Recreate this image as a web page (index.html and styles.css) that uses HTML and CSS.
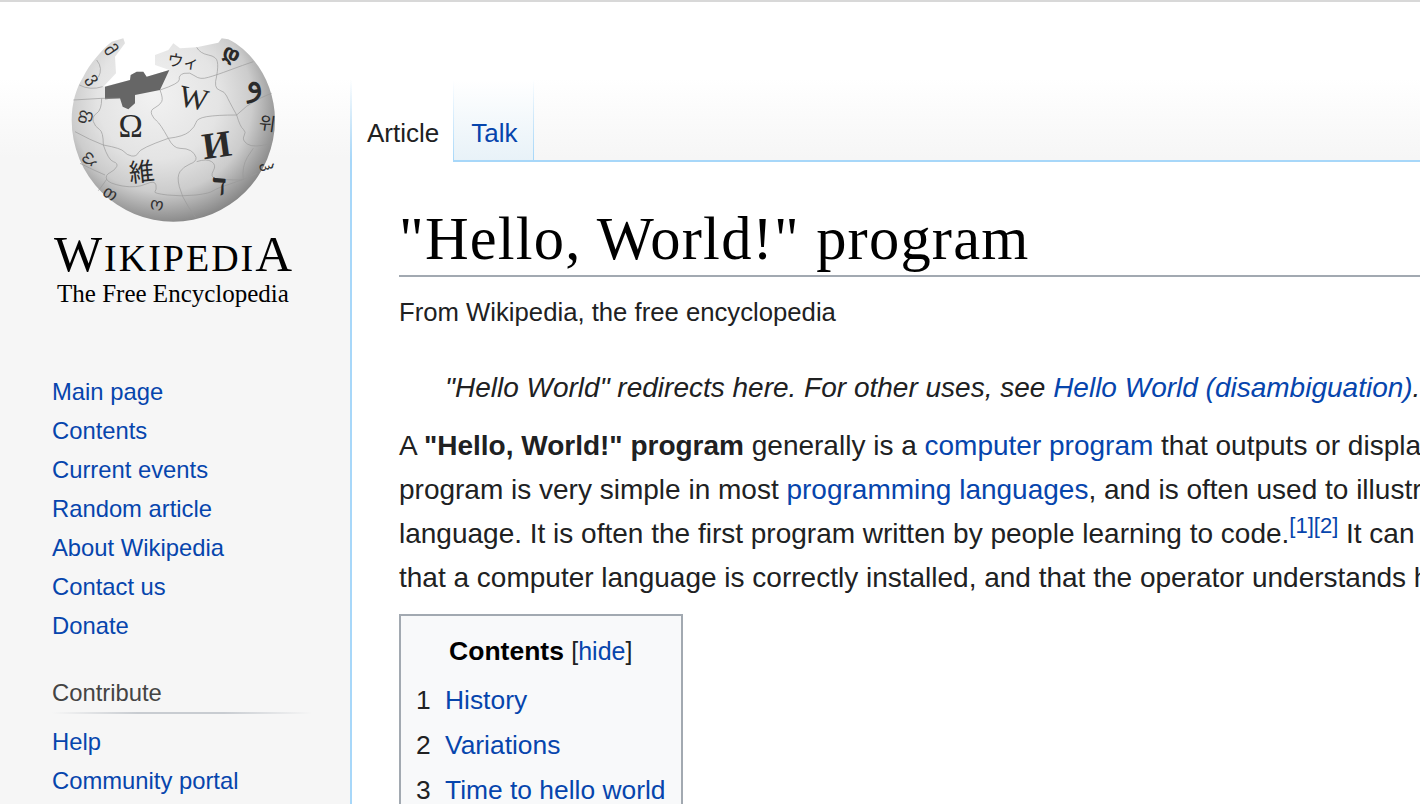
FILE: index.html
```html
<!DOCTYPE html>
<html>
<head>
    <title>"Hello, World!" program - Wikipedia</title>
    <link rel="stylesheet" href="styles.css">
</head>
<body>
    <div class="page">
        <aside class="sidebar">
            <div class="logo">
                <svg class="globe" viewBox="0 0 810 645" width="270" height="215">
                    <defs>
                        <radialGradient id="ball" gradientUnits="userSpaceOnUse" cx="370" cy="250" r="365" fx="340" fy="220">
                            <stop offset="0" stop-color="#f2f2f2"/>
                            <stop offset="0.5" stop-color="#e4e4e4"/>
                            <stop offset="0.75" stop-color="#cccccc"/>
                            <stop offset="1" stop-color="#858585"/>
                        </radialGradient>
                    </defs>
                    <!-- globe with the missing pieces at the top -->
                    <path fill="url(#ball)" d="M95 300C95 250 108 205 130 170C150 130 185 90 215 65L250 55L255 70L225 110L228 160L190 200L270 180L272 165L290 155L310 155L320 170L388 150L345 135L345 105L385 90L400 70L420 85L470 82L535 68L545 55L565 58C640 95 705 190 705 300A305 305 0 0 1 95 300Z"/>
                    <path fill="#666" d="M195 200L270 180L272 165L290 155L310 155L320 170L388 150L360 210L285 225L285 250L265 268L248 260L240 235L195 238Z"/>
                    <g class="seams">
                        <path d="M100 240L185 235L240 235"/>
                        <path d="M185 235Q185 270 170 280Q155 290 160 305Q165 320 178 328Q190 335 190 375"/>
                        <path d="M105 335Q150 360 190 375Q245 385 252 395Q260 405 275 408Q290 410 295 398Q300 385 385 355"/>
                        <path d="M385 355Q360 310 350 303Q340 295 335 283Q330 270 345 263Q360 255 365 245Q370 235 360 210"/>
                        <path d="M385 355Q430 350 448 335Q465 320 468 308Q470 295 500 290Q530 285 590 285Q620 255 650 240Q680 225 695 220"/>
                        <path d="M360 210Q420 190 418 178Q415 165 432 160Q450 155 465 168Q480 180 505 172Q530 165 570 150Q610 135 640 125"/>
                        <path d="M530 168Q520 205 538 210Q555 215 560 228Q565 240 590 285Q600 320 610 328Q620 335 612 348Q605 360 622 372Q640 385 695 370"/>
                        <path d="M385 355Q400 385 420 385Q440 385 452 392Q465 400 468 412Q470 425 450 432Q430 440 420 455Q410 470 418 500Q425 530 445 560Q465 590 470 596"/>
                        <path d="M470 425Q500 415 515 425Q530 435 520 452Q510 470 525 475Q540 480 610 480Q605 440 622 412Q635 392 640 385"/>
                        <path d="M190 375Q205 420 220 425Q235 430 230 440Q225 450 210 458Q195 465 200 478Q205 490 247 498Q290 505 318 492Q345 480 348 495Q350 510 345 515Q340 520 382 525Q425 530 468 525Q510 520 520 512Q530 505 570 492Q610 480 650 460"/>
                        <path d="M120 430Q160 450 195 465"/>
                        <path d="M470 82Q480 100 505 105Q530 110 532 125Q535 140 530 168"/>
                        <path d="M200 478Q185 500 175 512"/>
                        <path d="M118 195Q150 212 188 200"/>
                        <path d="M170 120Q190 145 175 172"/>
                    </g>
                    <g class="glyphs">
                        <text class="glyph-w" x="460" y="265" transform="rotate(12 460 240)">W</text>
                        <text class="glyph-o" x="272" y="350">Ω</text>
                        <text class="glyph-i" x="530" y="412" transform="rotate(-8 530 375)">И</text>
                        <text class="glyph-c" x="305" y="483" transform="rotate(-6 305 455)">維</text>
                        <text class="glyph-k" x="430" y="142" transform="rotate(8 430 125)">ウィ</text>
                        <text class="glyph-a" x="640" y="220" transform="rotate(-12 640 190)">و</text>
                        <text class="glyph-h" x="682" y="330" transform="rotate(8 682 312)">위</text>
                        <text class="glyph-l" x="538" y="525" transform="rotate(4 540 495)">ד</text>
                        <text class="glyph-s" x="130" y="305" transform="rotate(-78 130 290)">ფ</text>
                        <text class="glyph-s" x="145" y="430" transform="rotate(-50 145 415)">ღ</text>
                        <text class="glyph-s" x="155" y="190" transform="rotate(55 155 180)">ვ</text>
                        <text class="glyph-s" x="205" y="105" transform="rotate(55 205 95)">მ</text>
                        <text class="glyph-b" x="575" y="120" transform="rotate(25 575 100)">დ</text>
                        <text class="glyph-s" x="660" y="445" transform="rotate(75 660 445)">ჰ</text>
                        <text class="glyph-s" x="205" y="535" transform="rotate(30 205 530)">თ</text>
                        <text class="glyph-s" x="350" y="570" transform="rotate(10 350 560)">ო</text>
                    </g>
                </svg>
                <div class="wordmark">W<span class="sc">IKIPEDI</span>A</div>
                <div class="tagline">The Free Encyclopedia</div>
            </div>

            <nav class="nav-list first">
                <a href="#">Main page</a>
                <a href="#">Contents</a>
                <a href="#">Current events</a>
                <a href="#">Random article</a>
                <a href="#">About Wikipedia</a>
                <a href="#">Contact us</a>
                <a href="#">Donate</a>
            </nav>

            <h3 class="nav-heading">Contribute</h3>
            <nav class="nav-list">
                <a href="#">Help</a>
                <a href="#">Community portal</a>
            </nav>
        </aside>

        <main class="main">
            <div class="tabs">
                <a class="tab active" href="#">Article</a>
                <a class="tab" href="#">Talk</a>
                <div class="tabs-rest"></div>
            </div>
            <div class="content">
                <h1>"Hello, World!" program</h1>
                <div class="site-sub">From Wikipedia, the free encyclopedia</div>
                <div class="hatnote">"Hello World" redirects here. For other uses, see <a href="#">Hello World (disambiguation)</a>.</div>
                <p class="intro">A <b>"Hello, World!" program</b> generally is a <a href="#">computer program</a> that outputs or displays the message "Hello, World!". Such a<br>
                program is very simple in most <a href="#">programming languages</a>, and is often used to illustrate the basic syntax of a programming<br>
                language. It is often the first program written by people learning to code.<sup><a href="#">[1]</a><a href="#">[2]</a></sup> It can also be used to verify<br>
                that a computer language is correctly installed, and that the operator understands how to use it.</p>
                <div class="toc">
                    <div class="toc-title"><b>Contents</b> <span class="toc-toggle">[<a href="#">hide</a>]</span></div>
                    <ul>
                        <li><span class="num">1</span><a href="#">History</a></li>
                        <li><span class="num">2</span><a href="#">Variations</a></li>
                        <li><span class="num">3</span><a href="#">Time to hello world</a></li>
                    </ul>
                </div>
            </div>
        </main>
    </div>
</body>
</html>
```

FILE: styles.css
```css
html, body {
    height: 100%;
}
body {
    margin: 0;
    overflow: hidden;
    border-top: 2px solid #d8d8d8;
    box-sizing: border-box;
    font-family: "Liberation Sans", Arial, sans-serif;
    color: #202122;
    background: linear-gradient(to bottom, #fff 78px, #f6f6f6 158px);
}
a {
    color: #0645ad;
    text-decoration: none;
}
.page {
    display: flex;
    height: 802px;
}

/* sidebar */
.sidebar {
    width: 350px;
    flex-shrink: 0;
    padding-top: 18px;
    box-sizing: border-box;
}
.logo {
    text-align: center;
    width: 346px;
}
.globe {
    display: block;
    margin-left: 40px;
}
.seams path {
    fill: none;
    stroke: #999;
    stroke-width: 2;
}
.glyphs text {
    font-family: "Liberation Serif", "DejaVu Serif", "Noto Sans CJK JP", serif;
    text-anchor: middle;
    fill: #2a2a2a;
}
.glyph-w { font-size: 92px; }
.glyph-o { font-size: 98px; }
.glyphs .glyph-i { font-size: 112px; font-weight: bold; }
.glyph-c { font-size: 76px; }
.glyph-k { font-size: 48px; }
.glyphs .glyph-a { font-size: 110px; font-family: "DejaVu Sans", sans-serif; }
.glyphs .glyph-h { font-size: 54px; font-family: "Noto Sans CJK KR", sans-serif; }
.glyphs .glyph-l { font-size: 90px; font-weight: bold; }
.glyphs .glyph-s { font-size: 52px; font-family: "DejaVu Sans", sans-serif; fill: #333; }
.glyphs .glyph-b { font-size: 62px; font-family: "DejaVu Sans", sans-serif; font-weight: bold; }
.wordmark {
    font-family: "Liberation Serif", serif;
    font-size: 51px;
    line-height: 44px;
    margin-top: -3px;
    padding-left: 2px;
    color: #000;
    letter-spacing: 2px;
}
.wordmark .sc {
    font-size: 38px;
}
.tagline {
    font-family: "Liberation Serif", serif;
    font-size: 25px;
    line-height: 30px;
    margin-top: -1px;
    color: #000;
}
.nav-list {
    display: flex;
    flex-direction: column;
    padding-left: 52px;
    font-size: 23.8px;
    line-height: 39px;
}
.nav-list.first {
    margin-top: 63px;
}
.nav-heading {
    margin: 32px 38px 0 52px;
    padding-bottom: 5px;
    font-size: 23.8px;
    font-weight: normal;
    line-height: 32px;
    color: #444;
    background: linear-gradient(to right, rgba(200,204,209,0) 0, #c8ccd1 33%, #c8ccd1 66%, rgba(200,204,209,0) 100%) no-repeat left bottom / 100% 2px;
}
.nav-heading + .nav-list {
    margin-top: 8px;
}

/* main column */
.main {
    flex: 1;
    min-width: 0;
    border-left: 2px solid;
    border-image: linear-gradient(to bottom, rgba(167,215,249,0) 78px, #a7d7f9 158px) 1;
    display: flex;
    flex-direction: column;
}
.tabs {
    display: flex;
    height: 160px;
    flex-shrink: 0;
}
.tab {
    align-self: stretch;
    padding: 118px 15px 0 17px;
    font-size: 26px;
    line-height: 26px;
    box-sizing: border-box;
    border-bottom: 2px solid #a7d7f9;
    border-right: 1px solid;
    border-image: linear-gradient(to bottom, rgba(167,215,249,0) 78px, #a7d7f9 158px) 1;
    background: linear-gradient(to bottom, #fff 78px, #e8f2f8 158px);
}
.tab.active {
    padding-left: 15px;
    padding-right: 14px;
    color: #202122;
    background: #fff;
    border-bottom: none;
}
.tabs-rest {
    flex: 1;
    border-bottom: 2px solid #a7d7f9;
}
.content {
    flex: 1;
    background: #fff;
    padding: 0 0 0 47px;
    white-space: nowrap;
}
h1 {
    margin: 0;
    padding-top: 40px;
    font-family: "Liberation Serif", serif;
    font-size: 60.5px;
    font-weight: normal;
    letter-spacing: 1.2px;
    line-height: 73px;
    color: #000;
    border-bottom: 2px solid #a2a9b1;
}
.site-sub {
    margin-top: 17px;
    font-size: 25.7px;
    line-height: 36px;
}
.hatnote {
    margin-top: 40px;
    padding-left: 46px;
    font-size: 28px;
    line-height: 36px;
    font-style: italic;
}
.intro {
    margin: 18px 0 0;
    font-size: 28px;
    line-height: 44px;
}
sup {
    font-size: 22px;
    line-height: 0;
    vertical-align: baseline;
    position: relative;
    top: -10px;
}
.toc {
    display: inline-block;
    margin-top: 14px;
    padding: 15px 15px;
    border: 2px solid #a2a9b1;
    background: #f8f9fa;
}
.toc-title {
    text-align: center;
    font-size: 26.5px;
    line-height: 40px;
    color: #000;
}
.toc-toggle {
    font-size: 25px;
    color: #202122;
}
.toc ul {
    list-style: none;
    margin: 7px 0 0;
    padding: 0;
    font-size: 26.4px;
}
.toc li {
    line-height: 45px;
}
.num {
    display: inline-block;
    width: 29px;
}
```
